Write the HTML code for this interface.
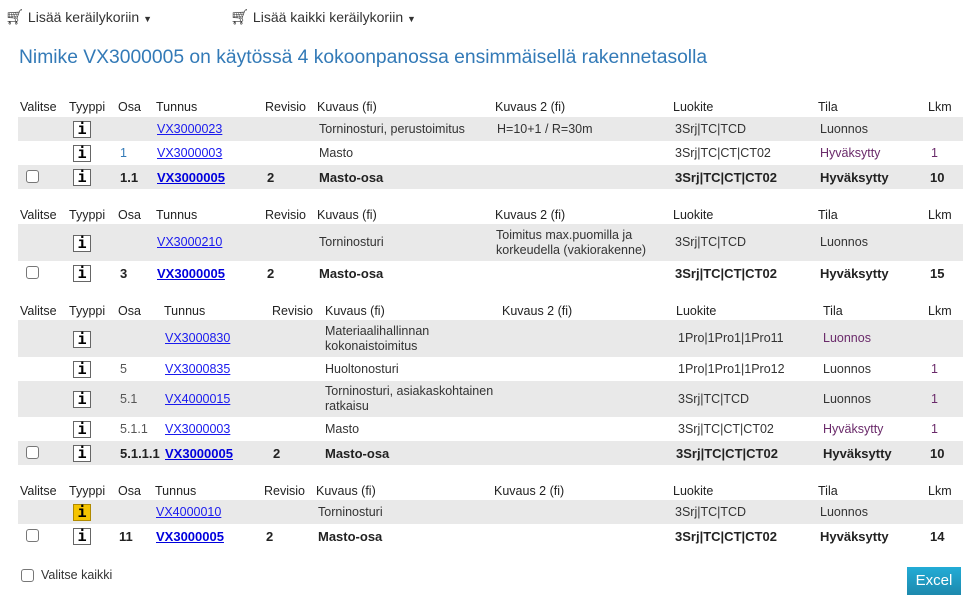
<!DOCTYPE html>
<html><head><meta charset="utf-8"><style>
*{margin:0;padding:0;box-sizing:border-box}
body{width:980px;height:606px;background:#fff;font-family:"Liberation Sans",sans-serif;font-size:12.5px;color:#333;position:relative;overflow:hidden}
.a{position:absolute}
.r{position:absolute;left:18px;width:945px}
.g{background:#e9e9e9}
.c{position:absolute;top:0;height:100%;display:flex;align-items:center;white-space:nowrap;line-height:15px}
.h .c{color:#222}
.b{font-weight:bold;font-size:13px;color:#222}
a{color:#1a1aee;text-decoration:underline}
.b a{color:#0000dd}
.i{position:absolute;top:50%;margin-top:-8px;width:18px;height:17px;border:1px solid #666;background:#fff;font:bold 15px "DejaVu Sans Mono",monospace;color:#000;text-align:center;line-height:15px}
.y{background:#f5c400;border-color:#b08a00}
.cb{position:absolute;top:50%;margin-top:-7px;width:13px;height:13px;border:1px solid #777;border-radius:3px;background:#fff}
.p{color:#6a2a6a}
.o{color:#555}
.bl{color:#337ab7}
.cart{font-family:"DejaVu Sans",sans-serif;font-size:15px}
</style></head><body>

<div class="a" style="left:5px;top:8px;font-size:14px;color:#333"><span class="cart">&#128722;&#xFE0E;</span> Lisää keräilykoriin <span style="font-size:9px">▼</span></div>
<div class="a" style="left:230px;top:8px;font-size:14px;color:#333"><span class="cart">&#128722;&#xFE0E;</span> Lisää kaikki keräilykoriin <span style="font-size:9px">▼</span></div>
<div class="a" style="left:19px;top:47px;font-size:19.3px;color:#337ab7">Nimike VX3000005 on käytössä 4 kokoonpanossa ensimmäisellä rakennetasolla</div>

<!-- block 1 -->
<div class="r h" style="top:99px;height:17px"><span class="c" style="left:2px">Valitse</span><span class="c" style="left:51px">Tyyppi</span><span class="c" style="left:100px">Osa</span><span class="c" style="left:138px">Tunnus</span><span class="c" style="left:247px">Revisio</span><span class="c" style="left:299px">Kuvaus (fi)</span><span class="c" style="left:477px">Kuvaus 2 (fi)</span><span class="c" style="left:655px">Luokite</span><span class="c" style="left:800px">Tila</span><span class="c" style="left:910px">Lkm</span></div>
<div class="r g" style="top:117px;height:24px"><span class="i" style="left:55px">i</span><span class="c" style="left:139px"><a>VX3000023</a></span><span class="c" style="left:301px">Torninosturi, perustoimitus</span><span class="c" style="left:479px">H=10+1 / R=30m</span><span class="c" style="left:657px">3Srj|TC|TCD</span><span class="c" style="left:802px">Luonnos</span></div>
<div class="r" style="top:141px;height:24px"><span class="i" style="left:55px">i</span><span class="c bl" style="left:102px">1</span><span class="c" style="left:139px"><a>VX3000003</a></span><span class="c" style="left:301px">Masto</span><span class="c" style="left:657px">3Srj|TC|CT|CT02</span><span class="c p" style="left:802px">Hyväksytty</span><span class="c p" style="left:913px">1</span></div>
<div class="r g b" style="top:165px;height:24px"><span class="cb" style="left:8px"></span><span class="i" style="left:55px">i</span><span class="c" style="left:102px">1.1</span><span class="c" style="left:139px"><a>VX3000005</a></span><span class="c" style="left:249px">2</span><span class="c" style="left:301px">Masto-osa</span><span class="c" style="left:657px">3Srj|TC|CT|CT02</span><span class="c" style="left:802px">Hyväksytty</span><span class="c" style="left:912px">10</span></div>

<!-- block 2 -->
<div class="r h" style="top:207px;height:17px"><span class="c" style="left:2px">Valitse</span><span class="c" style="left:51px">Tyyppi</span><span class="c" style="left:100px">Osa</span><span class="c" style="left:138px">Tunnus</span><span class="c" style="left:247px">Revisio</span><span class="c" style="left:299px">Kuvaus (fi)</span><span class="c" style="left:477px">Kuvaus 2 (fi)</span><span class="c" style="left:655px">Luokite</span><span class="c" style="left:800px">Tila</span><span class="c" style="left:910px">Lkm</span></div>
<div class="r g" style="top:224px;height:37px"><span class="i" style="left:55px">i</span><span class="c" style="left:139px"><a>VX3000210</a></span><span class="c" style="left:301px">Torninosturi</span><span class="c" style="left:478px;white-space:normal;width:170px">Toimitus max.puomilla ja korkeudella (vakiorakenne)</span><span class="c" style="left:657px">3Srj|TC|TCD</span><span class="c" style="left:802px">Luonnos</span></div>
<div class="r b" style="top:261px;height:24px"><span class="cb" style="left:8px"></span><span class="i" style="left:55px">i</span><span class="c" style="left:102px">3</span><span class="c" style="left:139px"><a>VX3000005</a></span><span class="c" style="left:249px">2</span><span class="c" style="left:301px">Masto-osa</span><span class="c" style="left:657px">3Srj|TC|CT|CT02</span><span class="c" style="left:802px">Hyväksytty</span><span class="c" style="left:912px">15</span></div>

<!-- block 3 -->
<div class="r h" style="top:303px;height:17px"><span class="c" style="left:2px">Valitse</span><span class="c" style="left:51px">Tyyppi</span><span class="c" style="left:100px">Osa</span><span class="c" style="left:146px">Tunnus</span><span class="c" style="left:254px">Revisio</span><span class="c" style="left:307px">Kuvaus (fi)</span><span class="c" style="left:484px">Kuvaus 2 (fi)</span><span class="c" style="left:658px">Luokite</span><span class="c" style="left:805px">Tila</span><span class="c" style="left:910px">Lkm</span></div>
<div class="r g" style="top:320px;height:37px"><span class="i" style="left:55px">i</span><span class="c" style="left:147px"><a>VX3000830</a></span><span class="c" style="left:307px;white-space:normal;width:170px">Materiaalihallinnan kokonaistoimitus</span><span class="c" style="left:660px">1Pro|1Pro1|1Pro11</span><span class="c p" style="left:805px">Luonnos</span></div>
<div class="r" style="top:357px;height:24px"><span class="i" style="left:55px">i</span><span class="c o" style="left:102px">5</span><span class="c" style="left:147px"><a>VX3000835</a></span><span class="c" style="left:307px">Huoltonosturi</span><span class="c" style="left:660px">1Pro|1Pro1|1Pro12</span><span class="c" style="left:805px">Luonnos</span><span class="c p" style="left:913px">1</span></div>
<div class="r g" style="top:381px;height:36px"><span class="i" style="left:55px">i</span><span class="c o" style="left:102px">5.1</span><span class="c" style="left:147px"><a>VX4000015</a></span><span class="c" style="left:307px;white-space:normal;width:180px">Torninosturi, asiakaskohtainen ratkaisu</span><span class="c" style="left:660px">3Srj|TC|TCD</span><span class="c" style="left:805px">Luonnos</span><span class="c p" style="left:913px">1</span></div>
<div class="r" style="top:417px;height:24px"><span class="i" style="left:55px">i</span><span class="c o" style="left:102px">5.1.1</span><span class="c" style="left:147px"><a>VX3000003</a></span><span class="c" style="left:307px">Masto</span><span class="c" style="left:660px">3Srj|TC|CT|CT02</span><span class="c p" style="left:805px">Hyväksytty</span><span class="c p" style="left:913px">1</span></div>
<div class="r g b" style="top:441px;height:24px"><span class="cb" style="left:8px"></span><span class="i" style="left:55px">i</span><span class="c" style="left:102px">5.1.1.1</span><span class="c" style="left:147px"><a>VX3000005</a></span><span class="c" style="left:255px">2</span><span class="c" style="left:307px">Masto-osa</span><span class="c" style="left:658px">3Srj|TC|CT|CT02</span><span class="c" style="left:805px">Hyväksytty</span><span class="c" style="left:912px">10</span></div>

<!-- block 4 -->
<div class="r h" style="top:483px;height:17px"><span class="c" style="left:2px">Valitse</span><span class="c" style="left:51px">Tyyppi</span><span class="c" style="left:100px">Osa</span><span class="c" style="left:137px">Tunnus</span><span class="c" style="left:246px">Revisio</span><span class="c" style="left:298px">Kuvaus (fi)</span><span class="c" style="left:476px">Kuvaus 2 (fi)</span><span class="c" style="left:655px">Luokite</span><span class="c" style="left:800px">Tila</span><span class="c" style="left:910px">Lkm</span></div>
<div class="r g" style="top:500px;height:24px"><span class="i y" style="left:55px">i</span><span class="c" style="left:138px"><a>VX4000010</a></span><span class="c" style="left:300px">Torninosturi</span><span class="c" style="left:657px">3Srj|TC|TCD</span><span class="c" style="left:802px">Luonnos</span></div>
<div class="r b" style="top:524px;height:24px"><span class="cb" style="left:8px"></span><span class="i" style="left:55px">i</span><span class="c" style="left:101px">11</span><span class="c" style="left:138px"><a>VX3000005</a></span><span class="c" style="left:248px">2</span><span class="c" style="left:300px">Masto-osa</span><span class="c" style="left:657px">3Srj|TC|CT|CT02</span><span class="c" style="left:802px">Hyväksytty</span><span class="c" style="left:912px">14</span></div>

<div class="a" style="left:21px;top:569px;width:13px;height:13px;border:1px solid #777;border-radius:3px"></div>
<div class="a" style="left:41px;top:568px;font-size:12.5px;color:#333">Valitse kaikki</div>

<div class="a" style="left:907px;top:567px;width:54px;height:28px;background:linear-gradient(#22acd6,#1d89ad);color:#fff;font-size:15px;text-align:center;line-height:28px">Excel</div>
</body></html>
